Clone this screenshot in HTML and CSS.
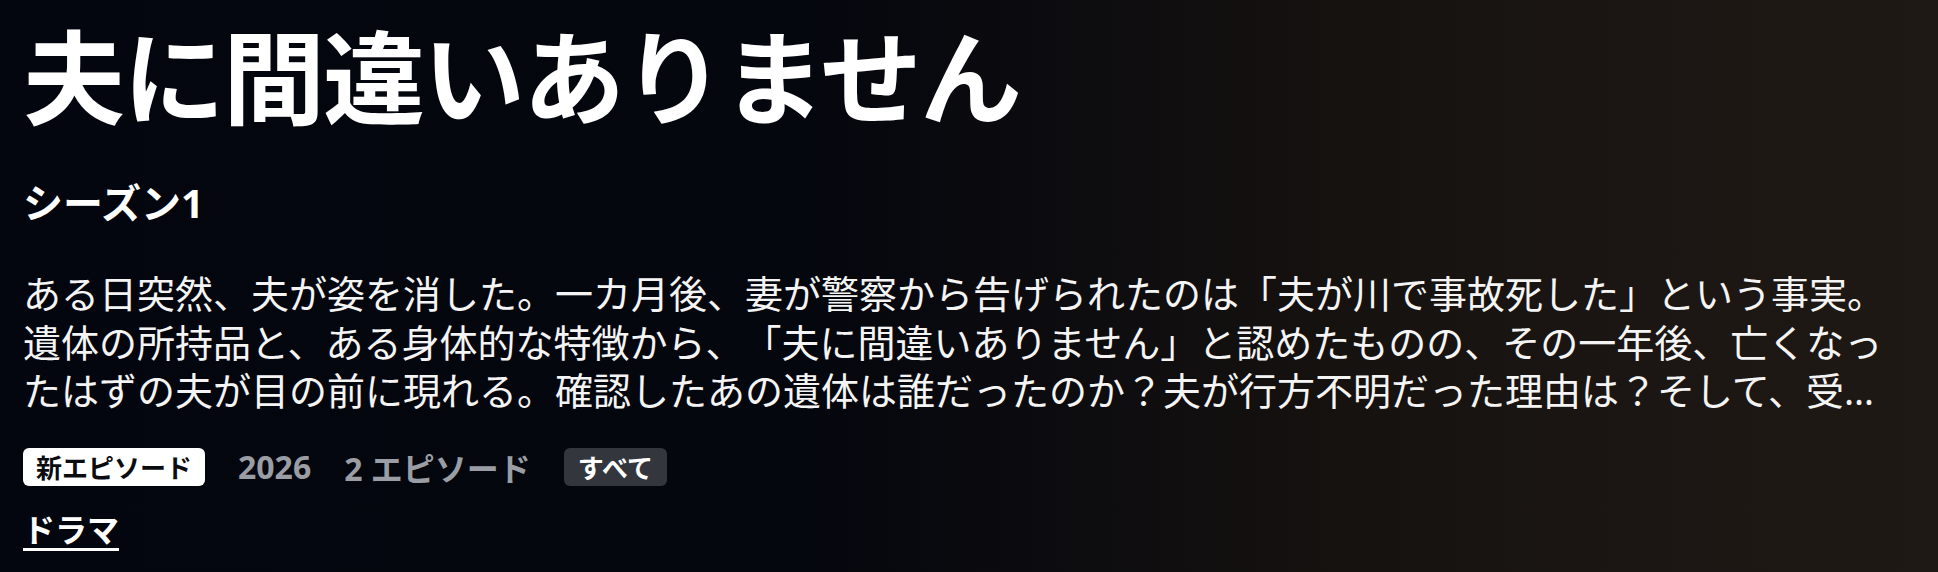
FILE: index.html
```html
<!DOCTYPE html>
<html lang="ja">
<head>
<meta charset="utf-8">
<link rel="stylesheet" href="styles.css">
</head>
<body>
<div class="hero">
  <div class="details">
    <h1 class="title">夫に間違いありません</h1>
    <h2 class="season">シーズン1</h2>
    <p class="synopsis">ある日突然、夫が姿を消した。一カ月後、妻が警察から告げられたのは「夫が川で事故死した」という事実。遺体の所持品と、ある身体的な特徴から、「夫に間違いありません」と認めたものの、その一年後、亡くなったはずの夫が目の前に現れる。確認したあの遺体は誰だったのか？夫が行方不明だった理由は？そして、受け取った保険金はどうなるのか。妻は真相を追い始める。</p>
    <div class="meta">
      <span class="badge badge-new">新エピソード</span>
      <span class="meta-text">2026</span>
      <span class="meta-text">2 エピソード</span>
      <span class="badge badge-rating">すべて</span>
    </div>
    <a class="genre" href="#">ドラマ</a>
  </div>
</div>
</body>
</html>
```

FILE: styles.css
```css
html, body {
  margin: 0;
  padding: 0;
}
body {
  width: 1938px;
  height: 572px;
  overflow: hidden;
  font-family: "Noto Sans", "Noto Sans CJK JP", sans-serif;
  color: #ffffff;
  background: #04070f;
  text-spacing-trim: space-all;
}
.hero {
  width: 1938px;
  height: 572px;
  background:
    linear-gradient(to right, #03060e 0%, #05070e 42%, #0d0c0f 56%, #16120f 70%, #1b1613 84%, #1f1915 100%);
}
.details {
  padding: 22px 0 0 23px;
  width: 1880px;
}
.title {
  margin: 0;
  font-size: 102px;
  line-height: 102px;
  font-weight: 700;
  letter-spacing: -2px;
  font-family: "Noto Sans CJK JP", sans-serif;
}
.season {
  margin: 55px 0 0;
  font-size: 40px;
  line-height: 48px;
  font-weight: 700;
}
.synopsis {
  margin: 42px 0 0;
  font-size: 38px;
  line-height: 48.5px;
  font-weight: 400;
  color: #f4f4f4;
  text-spacing-trim: space-all;
  display: -webkit-box;
  -webkit-line-clamp: 3;
  -webkit-box-orient: vertical;
  overflow: hidden;
}
.meta {
  margin-top: 33px;
  display: flex;
  align-items: center;
  gap: 33px;
  height: 38px;
}
.badge {
  display: inline-flex;
  align-items: center;
  height: 38px;
  padding: 0 14px;
  border-radius: 6px;
  font-size: 26px;
  font-weight: 700;
  box-sizing: border-box;
}
.badge-new {
  background: #ffffff;
  color: #0a0c10;
  padding: 0 13px;
}
.badge-rating {
  background: #33363d;
  color: #ffffff;
}
.meta-text {
  font-size: 32px;
  font-weight: 700;
  color: #9a9ea4;
}
.genre {
  display: inline-block;
  margin-top: 26px;
  font-size: 32px;
  line-height: 36px;
  font-weight: 700;
  color: #ffffff;
  text-decoration: underline;
  text-decoration-thickness: 3px;
  text-underline-offset: 6px;
}
```
